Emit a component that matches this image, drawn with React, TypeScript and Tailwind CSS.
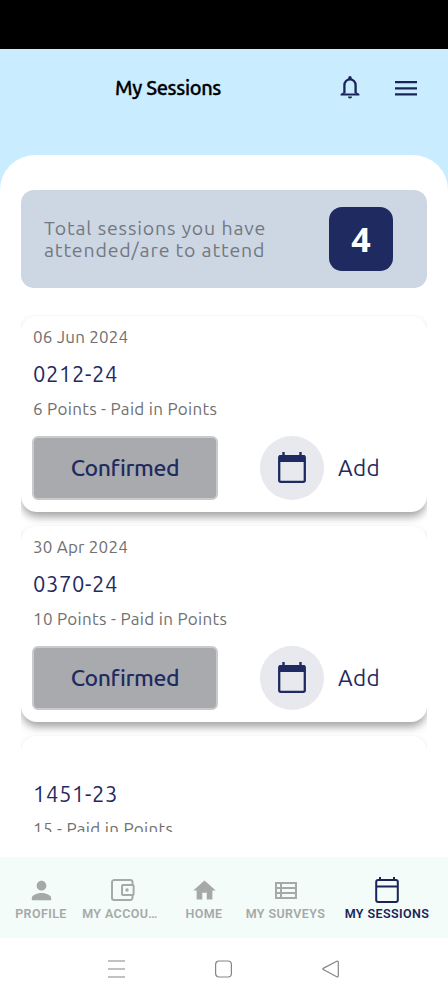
import React from "react";

const ubuntuLike = "font-['Ubuntu','Noto_Sans',sans-serif]";

function BellIcon() {
  return (
    <svg className="mt-[2px] ml-[4px] h-[23px] w-5" viewBox="0 0 20 23" fill="#1b2459">
      <path d="M8.3 2.9V1.7a1.7 1.7 0 0 1 3.4 0v1.2z" />
      <path d="M4.4 17.6V9.2a5.6 5.9 0 0 1 11.2 0v8.4" fill="none" stroke="#1b2459" strokeWidth="2.3" />
      <path d="M3.6 16.2.6 18v1.5h18.8V18l-3-1.8v1.2H3.6z" />
      <path d="M7.9 20.5h4.2a2.1 2 0 0 1-4.2 0z" />
    </svg>
  );
}

function MenuIcon() {
  return (
    <svg className="h-[15px] w-[22px]" viewBox="0 0 22 15" fill="#1b2459">
      <path d="M0 0h22v2.2H0zM0 6.2h22v2.2H0zM0 12.3h22v2.2H0z" />
    </svg>
  );
}

function CalendarIcon() {
  return (
    <svg className="h-8 w-7" viewBox="0 0 28 32" fill="none" stroke="#1f2a60">
      <path d="M5.5 0v4M22.5 0v4" strokeWidth="2.4" />
      <rect x="1.2" y="4.2" width="25.6" height="25.6" rx="1.6" strokeWidth="2.3" />
      <path d="M1 6.6h26" strokeWidth="6.8" />
    </svg>
  );
}

type Session = { date: string; code: string; points: string };

const sessions: Session[] = [
  { date: "06 Jun 2024", code: "0212-24", points: "6 Points - Paid in Points" },
  { date: "30 Apr 2024", code: "0370-24", points: "10 Points - Paid in Points" },
  { date: "", code: "1451-23", points: "15 - Paid in Points" },
];

function SessionCard({ date, code, points }: Session) {
  return (
    <article className="h-[210px] shrink-0 overflow-hidden">
      <div className="h-[197px] rounded-[16px] border-t border-[#f7f7f7] bg-white px-3 pt-[9px] shadow-[0_6px_8px_-1px_rgba(0,0,0,0.36)]">
        <p className="h-6 text-[17px] leading-6 tracking-[0.2px] whitespace-nowrap text-[#707070]">{date}</p>
        <h2 className="mt-[9px] text-[22px] leading-8 tracking-[0.6px] text-[#1f2a60]">{code}</h2>
        <p className="mt-[7px] text-[17px] leading-6 tracking-[0.32px] whitespace-nowrap text-[#707070]">{points}</p>
        <div className="mt-[15px] flex items-center">
          <button className="mr-[42px] -ml-px h-16 w-[186px] rounded-md border-2 border-[#c9cacc] bg-[#a8aaae] text-[23px] font-medium tracking-[-0.4px] text-[#1f2a60]">
            Confirmed
          </button>
          <span className="-mt-px flex size-16 items-center justify-center rounded-full bg-[#e8e9ee]">
            <CalendarIcon />
          </span>
          <span className="ml-[14px] text-[22.5px] tracking-[0.4px] text-[#1f2a60]">Add</span>
        </div>
      </div>
    </article>
  );
}

const glyphs = {
  profile: "M12 12c2.21 0 4-1.79 4-4s-1.79-4-4-4-4 1.79-4 4 1.79 4 4 4zm0 2c-2.67 0-8 1.34-8 4v2h16v-2c0-2.66-5.33-4-8-4z",
  home: "M10 20v-6h4v6h5v-8h3L12 3 2 12h3v8z",
};

function Tab({ label, width, active, children }: { label: string; width: string; active?: boolean; children: React.ReactNode }) {
  return (
    <div className={`flex shrink-0 flex-col items-center ${width} ${active ? "text-[#1b2459]" : "text-[#a5a9a8]"}`}>
      <span className="flex h-8 items-center justify-center">{children}</span>
      <span className="text-[12.5px] leading-4 font-semibold tracking-[0.4px] whitespace-nowrap">{label}</span>
    </div>
  );
}

function BottomTabs() {
  return (
    <nav className="flex h-[81px] shrink-0 bg-[#f3fcf9] pt-[17px] font-['Roboto',sans-serif]">
      <Tab label="PROFILE" width="w-[82px]">
        <svg className="size-[29px]" viewBox="0 0 24 24" fill="currentColor"><path d={glyphs.profile} /></svg>
      </Tab>
      <Tab label="MY ACCOU…" width="w-[76px]">
        <svg className="ml-[5px] h-[22px] w-6" viewBox="0 0 24 22" fill="none" stroke="currentColor" strokeWidth="2">
          <path d="M21.5 6V3.2A2.2 2.2 0 0 0 19.3 1H3.2A2.2 2.2 0 0 0 1 3.2v15.6A2.2 2.2 0 0 0 3.2 21h16.1a2.2 2.2 0 0 0 2.2-2.2V16" />
          <rect x="11" y="6" width="11.6" height="10" rx="1" />
          <circle cx="16" cy="11" r="1.7" fill="currentColor" stroke="none" />
        </svg>
      </Tab>
      <Tab label="HOME" width="w-[92px]">
        <svg className="size-[27px]" viewBox="0 0 24 24" fill="currentColor"><path d={glyphs.home} /></svg>
      </Tab>
      <Tab label="MY SURVEYS" width="w-[71px]">
        <svg className="h-[17px] w-[22px]" viewBox="0 0 22 17" fill="none" stroke="currentColor" strokeWidth="2">
          <path d="M1 1h20v15H1zM6 1v15M1 6h20M1 11h20" />
        </svg>
      </Tab>
      <div className="w-[5px] shrink-0" />
      <Tab label="MY SESSIONS" width="w-[122px]" active>
        <svg className="h-[26px] w-6" viewBox="0 0 24 26" fill="none" stroke="currentColor" strokeWidth="2">
          <path d="M5 0v3M19 0v3M1 9.5h22" />
          <rect x="1.2" y="3" width="21.6" height="22" rx="2" />
        </svg>
      </Tab>
    </nav>
  );
}

function SystemBar() {
  return (
    <div className="flex h-[62px] shrink-0 gap-[90px] pt-[22px] pl-[107.5px]">
      <svg className="h-[18px] w-[17px]" viewBox="0 0 17 18" stroke="#858585" strokeWidth="1.2"><path d="M0 1h17M0 9h17M0 17h17" /></svg>
      <svg className="h-[18px] w-[17px]" viewBox="0 0 17 18" fill="none" stroke="#858585" strokeWidth="1.2"><rect x=".6" y="1" width="15.8" height="16" rx="3.5" /></svg>
      <svg className="h-[18px] w-[17px]" viewBox="0 0 17 18" fill="none" stroke="#858585" strokeWidth="1.2"><path d="M1.2 8.4 14.7 1.2Q16.3.6 16.3 2.2v13.6q0 1.6-1.6 1L1.2 9.6Q.3 9 1.2 8.4Z" /></svg>
    </div>
  );
}

export default function App() {
  return (
    <div className={`flex h-[1000px] w-[448px] flex-col overflow-hidden bg-white ${ubuntuLike}`}>
      <div className="h-[49px] shrink-0 bg-black" />
      <div className="shrink-0 bg-[#c9ecff]">
        <header className="flex h-[106px] items-start pt-[25px] pl-[115px]">
          <h1 className="w-[221px] text-[20px] leading-7 font-medium tracking-[-0.36px] whitespace-nowrap text-black [-webkit-text-stroke:0.3px_black]">My Sessions</h1>
          <BellIcon />
          <div className="mt-[6.5px] ml-[35px]"><MenuIcon /></div>
        </header>
        <div className="h-[35px] rounded-t-[40px] bg-white" />
      </div>
      <main className="flex h-[642px] shrink-0 flex-col px-[21px]">
        <section className="flex h-[98px] shrink-0 items-center rounded-[13px] bg-[#cdd6e3] pl-[23px]">
          <p className="w-[285px] text-[19.5px] leading-[22.5px] tracking-[0.85px] text-[#737880]">Total sessions you have<br />attended/are to attend</p>
          <div className="flex size-16 items-center justify-center rounded-[13px] bg-[#1f2a60] font-['Noto_Sans',sans-serif] text-[34px] font-bold text-white">4</div>
        </section>
        <div className="mt-[27px] flex h-[517px] shrink-0 flex-col overflow-hidden">
          {sessions.map((session) => <SessionCard key={session.code} {...session} />)}
        </div>
      </main>
      <div className="h-[25px] shrink-0" />
      <BottomTabs />
      <SystemBar />
    </div>
  );
}
